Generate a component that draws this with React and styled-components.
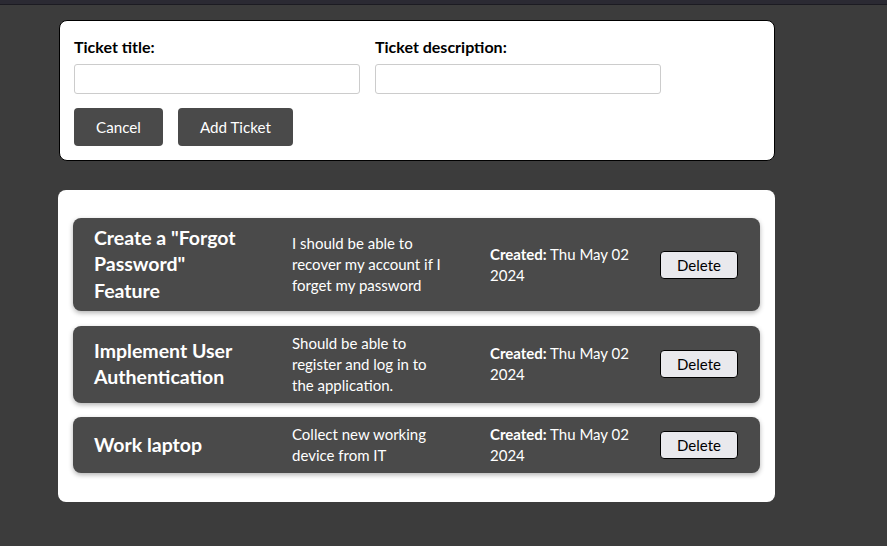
import React from "react";
import styled, { createGlobalStyle } from "styled-components";

const GlobalStyle = createGlobalStyle`
    html, body {
        margin: 0;
        padding: 0;
        background: #3c3c3c;
        font-family: "Lato", "Open Sans", sans-serif;
    }
`;

const tickets = [
    {
        id: 1,
        title: 'Create a "Forgot Password" Feature',
        description: "I should be able to recover my account if I forget my password",
        created: "Thu May 02 2024",
    },
    {
        id: 2,
        title: "Implement User Authentication",
        description: "Should be able to register and log in to the application.",
        created: "Thu May 02 2024",
    },
    {
        id: 3,
        title: "Work laptop",
        description: "Collect new working device from IT",
        created: "Thu May 02 2024",
    },
];

const App = () => {
    return (
        <>
            <GlobalStyle />
            <TopBar />
            <Page>
                <FormCard>
                    <Fields>
                        <Field>
                            <Label>Ticket title:</Label>
                            <Input type="text" />
                        </Field>
                        <Field>
                            <Label>Ticket description:</Label>
                            <Input type="text" />
                        </Field>
                    </Fields>
                    <Actions>
                        <DarkButton>Cancel</DarkButton>
                        <DarkButton>Add Ticket</DarkButton>
                    </Actions>
                </FormCard>
                <ListCard>
                    {tickets.map((ticket) => (
                        <TicketRow key={ticket.id}>
                            <TicketTitle>{ticket.title}</TicketTitle>
                            <TicketText $width={157}>{ticket.description}</TicketText>
                            <TicketText $width={160}>
                                <strong>Created:</strong> {ticket.created}
                            </TicketText>
                            <DeleteButton>Delete</DeleteButton>
                        </TicketRow>
                    ))}
                </ListCard>
            </Page>
        </>
    );
};

const TopBar = styled.div`
    height: 4px;
    background: #2b2a33;
    border-bottom: 1px solid #1c1b22;
`;

const Page = styled.main`
    display: flex;
    flex-direction: column;
    gap: 29px;
    padding: 15px 0 0 58px;
    width: 717px;
`;

const FormCard = styled.form`
    background: #fff;
    border: 1px solid #000;
    border-radius: 8px;
    margin-left: 1px;
    padding: 16px 14px 14px;
    display: flex;
    flex-direction: column;
    gap: 14px;
`;

const Fields = styled.div`
    display: flex;
    gap: 15px;
`;

const Field = styled.div`
    display: flex;
    flex-direction: column;
    gap: 7px;
`;

const Label = styled.label`
    font-size: 16px;
    font-weight: 700;
    line-height: 20px;
    color: #000;
`;

const Input = styled.input`
    box-sizing: border-box;
    width: 286px;
    height: 30px;
    border: 1px solid #ccc;
    border-radius: 3px;
    font: inherit;
`;

const Actions = styled.div`
    display: flex;
    gap: 15px;
`;

const DarkButton = styled.button`
    height: 38px;
    padding: 0 22px;
    background: #4a4a4a;
    color: #fff;
    border: none;
    border-radius: 4px;
    font-family: inherit;
    font-size: 15.2px;
`;

const ListCard = styled.section`
    background: #fff;
    border-radius: 8px;
    padding: 28px 15px 29px;
    display: flex;
    flex-direction: column;
    gap: 14.5px;
`;

const TicketRow = styled.div`
    display: grid;
    grid-template-columns: 198px 198px 170px 78px;
    align-items: center;
    padding: 7px 21px;
    background: #4a4a4a;
    color: #fff;
    border-radius: 8px;
    box-shadow: 0 2px 5px rgba(0, 0, 0, 0.3);
`;

const TicketTitle = styled.h3`
    margin: 0;
    width: 155px;
    font-size: 19.5px;
    font-weight: 700;
    line-height: 26.4px;
`;

const TicketText = styled.p`
    margin: 0;
    width: ${({ $width }) => $width}px;
    font-size: 15px;
    line-height: 21px;
`;

const DeleteButton = styled.button`
    height: 28px;
    background: #e9e9ed;
    color: #000;
    border: 1px solid #000;
    border-radius: 4px;
    font-family: inherit;
    font-size: 15px;
`;

export default App;
